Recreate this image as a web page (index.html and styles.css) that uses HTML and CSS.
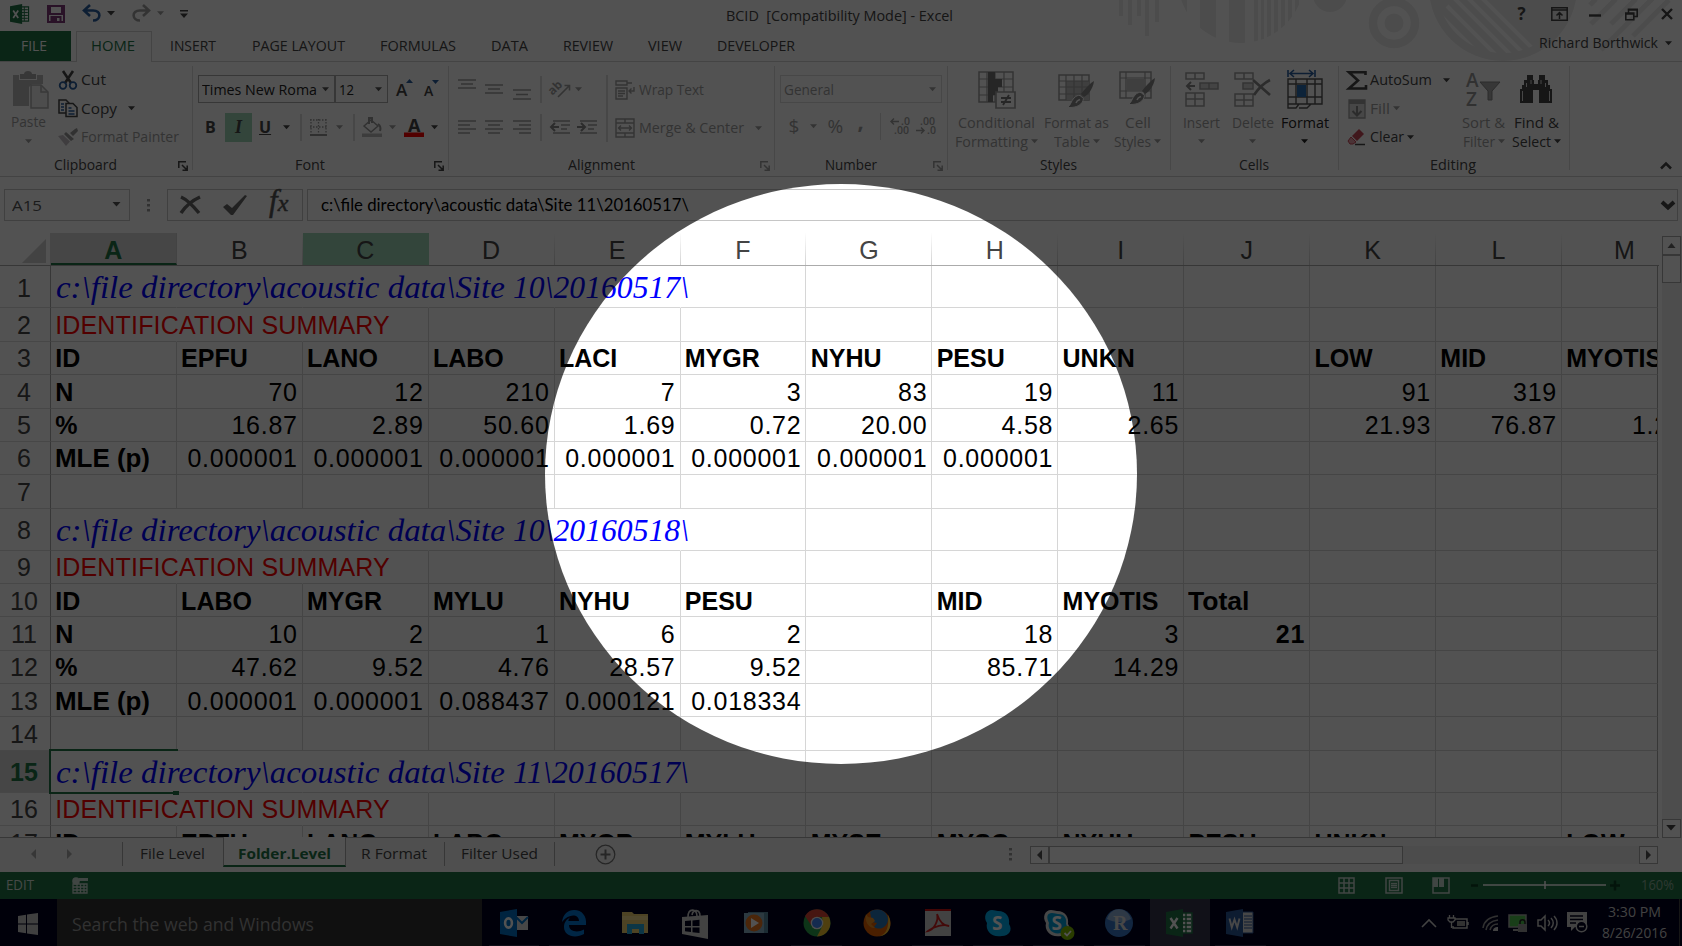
FILE: index.html
```html
<!DOCTYPE html>
<html lang="en">
<head>
<meta charset="utf-8">
<title>BCID [Compatibility Mode] - Excel</title>
<link rel="stylesheet" href="styles.css">
</head>
<body>
<svg class="defs" width="0" height="0">
  <defs>
    <symbol id="dn" viewBox="0 0 8 5"><path d="M0 0h8L4 4.6z" fill="currentColor"/></symbol>
    <symbol id="launch" viewBox="0 0 10 10"><path d="M.8 7V.8H8M4 4l5 5M9.2 4.5v4.7H4.5" fill="none" stroke="currentColor" stroke-width="1.5"/></symbol>
    <symbol id="xl" viewBox="0 0 28 28"><path d="M14 4h12v20H14z" fill="#fff" stroke="#217346" stroke-width="1.6"/><path d="M16 8h9M16 12h9M16 16h9M16 20h9M20 4v20" stroke="#217346" stroke-width="1.4"/><path d="M0 3L17 0v28L0 25z" fill="#217346"/><path d="M4.5 9l7 10.500M11.500 9l-7 10.500" stroke="#fff" stroke-width="2.400"/></symbol>
    <symbol id="brush" viewBox="0 0 28 28"><path d="M27 0c-1 8-6 14-10 16l-3-3C17 9 22 3 27 0z" fill="#888"/><path d="M13 14.500l3.500 3c-1 6-6 9.500-16 9C4 24 4 20 7 17c2-2 4-3 6-2.500z" fill="#888" stroke="#fff"/><path d="M9 22c1-3 3-3 4-3.500" stroke="#fff" fill="none" stroke-width="1.500"/></symbol>
    <symbol id="lines" viewBox="0 0 18 14"><path d="M0 1h18M0 5h12M0 9h18M0 13h12" stroke="currentColor" stroke-width="1.400"/></symbol>
  </defs>
</svg>
<div class="app">
  <div class="chrome">
    <svg class="art" viewBox="1110 0 572 61" fill="#ececec">
      <path d="M1119 0h4v16h-4zM1128 0h4v25h-4zM1137 0h4v16h-4zM1145 0h4v36h-4zM1155 0h4v22h-4z"/>
      <clipPath id="c1"><circle cx="1241" cy="-20" r="63"/></clipPath>
      <path clip-path="url(#c1)" d="M1178 0h9v50h-9zM1200 0h16v50h-16zM1229 0h16v50h-16zM1254 0h4v50h-4zM1261 0h3v50h-3zM1267 0h4v50h-4zM1274 0h4v50h-4zM1281 0h4v50h-4zM1288 0h4v50h-4zM1295 0h4v50h-4z"/>
      <circle cx="1330" cy="-5" r="17"/><circle cx="1394" cy="23" r="21" fill="none" stroke="#ececec" stroke-width="8.500"/><circle cx="1394" cy="23" r="9.500"/>
      <circle cx="1503" cy="-13" r="74"/>
      <clipPath id="c2"><circle cx="1503" cy="-13" r="66"/></clipPath>
      <path clip-path="url(#c2)" d="M1437 12l60 60M1447 6l60 60M1452-4l70 70M1464-6l70 70M1476-8l70 70" stroke="#fff" stroke-width="4"/>
      <path d="M1590 5l6-6M1591 24l25-25M1611 24l25-25M1601 50l53-53M1633 36l36-36" stroke="#ececec" stroke-width="5"/>
    </svg>
    <div class="titlebar">
      <div class="qat">
        <svg width="20" height="20"><use href="#xl"/></svg>
        <svg width="18" height="18" viewBox="0 0 18 18"><path d="M1 1h16v16H1z" fill="#fff" stroke="#80397b" stroke-width="2"/><path d="M3 1v8h12V1M4.500 17v-5h9v5" fill="none" stroke="#80397b" stroke-width="2"/><path d="M5 12h5v5H5z" fill="#80397b"/></svg>
        <svg width="18" height="17" viewBox="0 0 18 17"><path d="M7 0L1 5.500 7 11M1.500 5.500H10c9 0 8 10 0 10" fill="none" stroke="#2a5fa0" stroke-width="2.600"/></svg>
        <svg class="g4" width="8" height="5"><use href="#dn"/></svg>
        <svg class="dis" width="18" height="17" viewBox="0 0 18 17"><path d="M11 0l6 5.500L11 11M16.500 5.500H8c-9 0-8 10 0 10" fill="none" stroke="currentColor" stroke-width="2.600"/></svg>
        <svg class="dis" width="7" height="5"><use href="#dn"/></svg>
        <svg width="8" height="8" viewBox="0 0 8 8"><path d="M0 0h8v1.500H0zM0 3.500h8L4 8z" fill="#444"/></svg>
      </div>
      <div class="title"><span data-w="227">BCID&nbsp; [Compatibility Mode] - Excel</span></div>
      <div class="winbtns">
        <b class="q">?</b>
        <svg width="17" height="14" viewBox="0 0 17 14"><path d="M.8.800h15.400v12.400H.8zM.8 3h15.400M8.500 12V6M5.500 8.500l3-3 3 3" fill="none" stroke="#444" stroke-width="1.500"/></svg>
        <svg width="12" height="14" viewBox="0 0 12 14"><path d="M0 8.500h12" stroke="#444" stroke-width="2.400"/></svg>
        <svg width="13" height="13" viewBox="0 0 13 13"><path d="M.8 5h8v6.800h-8zM.8 6h8M3.500 5V1.200h8.700V8.500H9M3.500 2h9" fill="none" stroke="#444" stroke-width="1.600"/></svg>
        <svg width="12" height="12" viewBox="0 0 12 12"><path d="M1 1l10 10M11 1L1 11" stroke="#444" stroke-width="2.400"/></svg>
      </div>
    </div>
    <div class="tabs">
      <div class="tab file"><span data-w="26">FILE</span></div>
      <div class="tab home"><span data-w="44">HOME</span></div>
      <div class="tab t3"><span data-w="46">INSERT</span></div>
      <div class="tab t4"><span data-w="93">PAGE LAYOUT</span></div>
      <div class="tab t5"><span data-w="76">FORMULAS</span></div>
      <div class="tab t6"><span data-w="37">DATA</span></div>
      <div class="tab t7"><span data-w="50">REVIEW</span></div>
      <div class="tab t8"><span data-w="34">VIEW</span></div>
      <div class="tab t9"><span data-w="78">DEVELOPER</span></div>
      <div class="user"><span data-w="119">Richard Borthwick</span><svg width="7" height="5"><use href="#dn"/></svg></div>
    </div>
  </div>

  <div class="ribbon">
    <section class="group clip">
      <div class="body">
        <div class="big paste dis">
          <svg width="36" height="38" viewBox="0 0 36 38"><path d="M0 4h6v5h18V4h6v9h-11l-3 3v19H0z" fill="#bcbcbc"/><path d="M7 3h4c0-4 8-4 8 0h4v5H7z" fill="#aaa"/><path d="M18 14h10l7 7v16H18z" fill="#eee" stroke="#b0b0b0" stroke-width="1.500"/><path d="M28 14v7h7" fill="none" stroke="#b0b0b0" stroke-width="1.500"/></svg>
          <span class="l1" data-w="35">Paste</span>
          <svg class="l2" width="7" height="5"><use href="#dn"/></svg>
        </div>
        <div class="stack">
          <div class="row"><svg width="20" height="19" viewBox="0 0 20 19"><path d="M5 0l8 12M15 0L7 12" stroke="#444" stroke-width="2.600"/><circle cx="5" cy="14.500" r="3.300" fill="none" stroke="#2a5fa0" stroke-width="1.800"/><circle cx="15" cy="14.500" r="3.300" fill="none" stroke="#2a5fa0" stroke-width="1.800"/></svg><span data-w="25">Cut</span></div>
          <div class="row"><svg width="20" height="19" viewBox="0 0 20 19"><path d="M1 1h7l3 3v10H1z" fill="#fff" stroke="#444" stroke-width="1.500"/><path d="M8 4.500h7l4 4v9H8z" fill="#fff" stroke="#444" stroke-width="1.500"/><path d="M3 5h3M3 8h3M3 11h3M10.500 9h3M10.500 12h6M10.500 15h6" stroke="#2a5fa0" stroke-width="1.300"/></svg><span data-w="36">Copy</span><svg class="g10" width="7" height="5"><use href="#dn"/></svg></div>
          <div class="row dis"><svg width="20" height="18" viewBox="0 0 20 18"><path d="M19 0l1 3-5 5-3-3 5-4zM8 4l8 7-3 2-7-7z" fill="#999"/><path d="M5 7l7 6.500L8 18 0 8z" fill="#c4bfc4"/></svg><span data-w="98">Format Painter</span></div>
        </div>
      </div>
      <div class="foot"><span data-w="63">Clipboard</span><svg class="lc" width="10" height="10"><use href="#launch"/></svg></div>
    </section>

    <section class="group font">
      <div class="body col">
        <div class="combos">
          <div class="combo w1"><span data-w="115">Times New Roma</span><svg width="7" height="5"><use href="#dn"/></svg></div>
          <div class="combo w2"><span data-w="15">12</span><svg width="7" height="5"><use href="#dn"/></svg></div>
          <svg class="ag" width="18" height="20" viewBox="0 0 18 20"><text x="0" y="17" class="bigA">A</text><path d="M10 4l3.500-4L17 4z" fill="#2a5fa0"/></svg>
          <svg class="as" width="16" height="20" viewBox="0 0 16 20"><text x="0" y="17" class="smA">A</text><path d="M8 1h7l-3.500 4z" fill="#2a5fa0"/></svg>
        </div>
        <div class="fmt">
          <b>B</b><i>I</i><u>U</u><svg width="7" height="5"><use href="#dn"/></svg><s></s>
          <svg class="dis" width="17" height="17" viewBox="0 0 17 17"><path d="M1 0v15M8.500 0v15M16 0v15M0 1h17M0 8h17" stroke="#999" stroke-width="1.300" stroke-dasharray="1.500 1.500"/><path d="M0 16h17" stroke="#888" stroke-width="1.800"/></svg>
          <svg class="dis" width="7" height="5"><use href="#dn"/></svg><s></s>
          <svg class="dis" width="20" height="21" viewBox="0 0 20 21"><path d="M2 9l7-6 7 6-7 6z" fill="none" stroke="#999" stroke-width="1.500"/><path d="M7 7V1h3v5M16 7c3 2 3 4 2 7" fill="none" stroke="#999" stroke-width="2"/><path d="M0 16.500h20V20H0z" fill="#bbb"/></svg>
          <svg class="dis" width="7" height="5"><use href="#dn"/></svg>
          <svg width="20" height="20" viewBox="0 0 20 20"><text x="4" y="14" class="fcA">A</text><path d="M0 14.500h20V19H0z" fill="#f00"/></svg>
          <svg width="7" height="5"><use href="#dn"/></svg>
        </div>
      </div>
      <div class="foot"><span data-w="30">Font</span><svg class="lc" width="10" height="10"><use href="#launch"/></svg></div>
    </section>

    <section class="group align dis">
      <div class="body al">
        <div class="algrid">
          <svg width="18" height="24" viewBox="0 0 18 24"><path d="M0 3h18M3 7h12M0 11h18" stroke="currentColor" stroke-width="1.400"/></svg>
          <svg width="18" height="24" viewBox="0 0 18 24"><path d="M0 8h18M3 12h12M0 16h18" stroke="currentColor" stroke-width="1.400"/></svg>
          <svg width="18" height="24" viewBox="0 0 18 24"><path d="M0 13h18M3 17.500h12M0 22h18" stroke="currentColor" stroke-width="1.400"/></svg>
          <s></s>
          <div class="pair"><svg width="21" height="20" viewBox="0 0 21 20"><text transform="translate(4 14) rotate(-45)" x="-3" y="1" class="ab">ab</text><path d="M8 18L19 7M14.500 6.500h5v5" fill="none" stroke="currentColor" stroke-width="1.600"/></svg><svg class="g4" width="7" height="5"><use href="#dn"/></svg></div>
          <svg width="18" height="14"><use href="#lines"/></svg>
          <svg width="18" height="14" viewBox="0 0 18 14"><path d="M0 1h18M3 5h12M0 9h18M3 13h12" stroke="currentColor" stroke-width="1.400"/></svg>
          <svg width="18" height="14" viewBox="0 0 18 14"><path d="M0 1h18M6 5h12M0 9h18M6 13h12" stroke="currentColor" stroke-width="1.400"/></svg>
          <s></s>
          <div class="pair"><svg width="20" height="14" viewBox="0 0 20 14"><path d="M3 1h17M11 5h9M11 9h6M3 13h17" stroke="currentColor" stroke-width="1.400"/><path d="M9 7H2M5 3L1 7l4 4" fill="none" stroke="#888" stroke-width="2"/></svg><svg class="g7" width="20" height="14" viewBox="0 0 20 14"><path d="M3 1h17M11 5h9M11 9h6M3 13h17" stroke="currentColor" stroke-width="1.400"/><path d="M0 7h7M4 3l4 4-4 4" fill="none" stroke="#888" stroke-width="2"/></svg></div>
        </div>
        <s class="tall"></s>
        <div class="wm">
          <div class="row"><svg width="20" height="20" viewBox="0 0 20 20"><path d="M1 1h11v4H1zM12 3h5M1 8h11v11H1zM3 11h7M3 13.500h7M3 16h5M19 7v4h-5M16.500 8.500L14 11l2.500 2.500" fill="none" stroke="currentColor" stroke-width="1.400"/></svg><span data-w="65">Wrap Text</span></div>
          <div class="row"><svg width="20" height="20" viewBox="0 0 20 20"><path d="M1 1h18v18H1zM1 5h18M1 15h18M10 1v4M10 15v4M3.500 10h13M6 7.500L3.500 10 6 12.500M14 7.500l2.500 2.500-2.500 2.500" fill="none" stroke="currentColor" stroke-width="1.400"/></svg><span data-w="105">Merge &amp; Center</span><svg class="g10" width="7" height="5"><use href="#dn"/></svg></div>
        </div>
      </div>
      <div class="foot"><span data-w="67">Alignment</span><svg class="lc" width="10" height="10"><use href="#launch"/></svg></div>
    </section>

    <section class="group number dis">
      <div class="body col">
        <div class="combos"><div class="combo w3"><span data-w="50">General</span><svg width="7" height="5"><use href="#dn"/></svg></div></div>
        <div class="nums"><span class="sym">$</span><svg width="7" height="5"><use href="#dn"/></svg><span class="sym">%</span><span class="sym comma">,</span><s></s>
          <svg width="19" height="18" viewBox="0 0 19 18"><text x="11" y="8" class="dec">.0</text><text x="4" y="17" class="dec">.00</text><path d="M9 4.500H1M4 1.500l-3 3 3 3" fill="none" stroke="currentColor" stroke-width="1.500"/></svg>
          <svg width="19" height="18" viewBox="0 0 19 18"><text x="4" y="8" class="dec">.00</text><text x="11" y="17" class="dec">.0</text><path d="M0 13.500h8M5 10.500l3 3-3 3" fill="none" stroke="currentColor" stroke-width="1.500"/></svg></div>
      </div>
      <div class="foot"><span data-w="52">Number</span><svg class="lc" width="10" height="10"><use href="#launch"/></svg></div>
    </section>

    <section class="group styles dis">
      <div class="body">
        <div class="big b1"><svg width="38" height="38" viewBox="0 0 38 38"><path d="M1 1h34v30H1z" fill="#fff" stroke="currentColor" stroke-width="1.500"/><path d="M1 8h34M1 16h34M1 24h34M9 1v30M17 1v30M26 1v30" stroke="currentColor" stroke-width="1.200"/><path d="M10 1h7v7h7v8h-4v8h-5v7h-5z" fill="#777"/><path d="M18 21h19v16H18z" fill="#fff" stroke="currentColor" stroke-width="1.700"/><path d="M23 27h10M23 31h10M31 24l-6 10" stroke="#777" stroke-width="1.800"/></svg>
          <span class="l1" data-w="77">Conditional</span><div class="l2"><span data-w="73">Formatting</span><svg width="7" height="5"><use href="#dn"/></svg></div></div>
        <div class="big b2"><svg width="38" height="38" viewBox="0 0 38 38"><path d="M1 4h30v25H1z" fill="#fff" stroke="currentColor" stroke-width="1.500"/><path d="M8 10h23v19H8z" fill="#c4c4c4"/><path d="M1 10h30M1 16h30M1 23h30M8 4v25M16 4v25M24 4v25" stroke="currentColor" stroke-width="1.200"/><use href="#brush" x="9" y="10" width="28" height="28"/></svg>
          <span class="l1" data-w="65">Format as</span><div class="l2"><span data-w="36">Table</span><svg width="7" height="5"><use href="#dn"/></svg></div></div>
        <div class="big b3"><svg width="38" height="38" viewBox="0 0 38 38"><path d="M1 1h31v26H1z" fill="#fff" stroke="currentColor" stroke-width="1.500"/><path d="M1 7h31M1 20h31M7 1v26M26 1v26" stroke="currentColor" stroke-width="1.200"/><path d="M8 8h18v12H8z" fill="#c4c4c4"/><use href="#brush" x="9" y="7" width="28" height="28"/></svg>
          <span class="l1" data-w="26">Cell</span><div class="l2"><span data-w="37">Styles</span><svg width="7" height="5"><use href="#dn"/></svg></div></div>
      </div>
      <div class="foot"><span data-w="37">Styles</span></div>
    </section>

    <section class="group cells">
      <div class="body">
        <div class="big b1 dis"><svg width="34" height="38" viewBox="0 0 34 38"><path d="M1 2h18v6H1zM10 2v6M1 22h18v13H1zM1 28h18M10 22v13" fill="none" stroke="currentColor" stroke-width="1.500"/><path d="M15 12h18v6H15zM24 12v6" fill="#d4d4d4" stroke="currentColor" stroke-width="1.500"/><path d="M10 15H2M6 11l-4 4 4 4" fill="none" stroke="#888" stroke-width="2"/></svg>
          <span class="l1" data-w="37">Insert</span><svg class="l2" width="7" height="5"><use href="#dn"/></svg></div>
        <div class="big b2 dis"><svg width="38" height="38" viewBox="0 0 38 38"><path d="M1 2h18v6H1zM10 2v6M1 23h18v12H1zM1 29h18M10 23v12" fill="none" stroke="currentColor" stroke-width="1.500"/><path d="M9 12h10v6H9z" fill="#d4d4d4" stroke="currentColor" stroke-width="1.500"/><path d="M19 9l17 15M36 9C30 12 24 18 20 24" fill="none" stroke="#888" stroke-width="2.600"/></svg>
          <span class="l1" data-w="42">Delete</span><svg class="l2" width="7" height="5"><use href="#dn"/></svg></div>
        <div class="big b3"><svg width="36" height="39" viewBox="0 0 36 39"><path d="M1 0v7M28 0v7M3 3.500h23M7 0L3 3.500 7 7M22 0l4 3.500L22 7" fill="none" stroke="#2a5fa0" stroke-width="1.600"/><path d="M1 9h34v25H1zM1 14h34M1 27h34M9 9v25M20 9v25M28 9v25M1 34v4h8l3-4M12 38h8l4-4" fill="none" stroke="#555" stroke-width="1.400"/><path d="M10 15h9v12h-9z" fill="#2a6fb0"/></svg>
          <span class="l1" data-w="48">Format</span><svg class="l2" width="7" height="5"><use href="#dn"/></svg></div>
      </div>
      <div class="foot"><span data-w="30">Cells</span></div>
    </section>

    <section class="group edit">
      <div class="body">
        <div class="stack">
          <div class="row"><svg width="20" height="19" viewBox="0 0 20 19"><path d="M18.500 4V1.300H2L11 9.500 2 17.500h17V14" fill="none" stroke="#444" stroke-width="2.600"/></svg><span data-w="62">AutoSum</span><svg class="g10" width="7" height="5"><use href="#dn"/></svg></div>
          <div class="row dis"><svg width="20" height="20" viewBox="0 0 20 20"><path d="M2 1h16v18H2z" fill="#ddd" stroke="currentColor" stroke-width="1.300"/><path d="M2 1h16v4H2z" fill="currentColor"/><path d="M10 7v9M5.500 12l4.500 4.500 4.500-4.500" fill="none" stroke="#888" stroke-width="2"/></svg><span data-w="20">Fill</span><svg class="g3" width="7" height="5"><use href="#dn"/></svg></div>
          <div class="row"><svg width="20" height="17" viewBox="0 0 20 17"><path d="M12 0l5 5-7 7-5-5z" fill="#c84858"/><path d="M4 8l5 5-3 2H3l-2-3z" fill="#e8a0a8" stroke="#c84858"/><path d="M8 15.500h10" stroke="#444" stroke-width="1.500"/></svg><span data-w="34">Clear</span><svg class="g3" width="7" height="5"><use href="#dn"/></svg></div>
        </div>
        <div class="big b4 dis"><svg width="38" height="38" viewBox="0 0 38 38"><text x="1" y="16" class="az">A</text><text x="1" y="35" class="az">Z</text><path d="M15 11h20l-8 9v9h-4v-9z" fill="#aaa" stroke="#888"/></svg>
          <span class="l1" data-w="43">Sort &amp;</span><div class="l2"><span data-w="32">Filter</span><svg width="7" height="5"><use href="#dn"/></svg></div></div>
        <div class="big b5"><svg width="34" height="38" viewBox="0 0 34 38"><path d="M1 32V18h2v-4h2V9h3V4h6v5h1v4h4V9h1V4h6v5h3v5h2v4h2v14H20V19h-6v13z" fill="#444"/><path d="M3.500 20v10M30.500 20v10M7.500 12v4M26.500 12v4M12 9v4M22 9v4" stroke="#ddd" stroke-width="1"/></svg>
          <span class="l1" data-w="45">Find &amp;</span><div class="l2"><span data-w="39">Select</span><svg width="7" height="5"><use href="#dn"/></svg></div></div>
      </div>
      <div class="foot"><span data-w="46">Editing</span></div>
    </section>
    <div class="collapse"><svg width="12" height="9" viewBox="0 0 12 9"><path d="M1 7.500l5-5 5 5" fill="none" stroke="#444" stroke-width="2.500"/></svg></div>
  </div>

  <div class="fbar">
    <div class="namebox"><span data-w="30">A15</span><svg width="9" height="5"><use href="#dn"/></svg></div>
    <svg class="dots" width="3" height="13" viewBox="0 0 3 13"><path d="M0 0h3v2.500H0zM0 5h3v2.500H0zM0 10h3v2.500H0z" fill="#999"/></svg>
    <div class="fbtns">
      <svg width="22" height="20" viewBox="0 0 22 20"><path d="M2 2c7 3 13 10 18 16M21 2C12 6 6 12 2 18" fill="none" stroke="#666" stroke-width="3.400"/></svg>
      <svg width="24" height="20" viewBox="0 0 24 20"><path d="M0 12l4-3 5 4L22 0l2 1L10 20H8z" fill="#666"/></svg>
      <span class="fx">f<small>x</small></span>
    </div>
    <div class="finput"><span data-w="368">c:\file directory\acoustic data\Site 11\20160517\</span><svg width="14" height="10" viewBox="0 0 14 10"><path d="M1 2l6 5.500L13 2" fill="none" stroke="#444" stroke-width="4"/></svg></div>
  </div>

  <div class="sheetwrap">
    <div class="sheet" id="sheet"></div>
    <div class="vscroll">
      <div class="sb up"><svg width="9" height="5" viewBox="0 0 8 5"><path d="M0 5h8L4 0z" fill="#666"/></svg></div>
      <div class="thumb"></div>
      <div class="sb down"><svg width="10" height="6"><use href="#dn"/></svg></div>
    </div>
  </div>

  <div class="sheettabs">
    <div class="nav"><svg width="5" height="10" viewBox="0 0 5 10"><path d="M5 0v10L0 5z" fill="#aaa"/></svg><svg width="5" height="10" viewBox="0 0 5 10"><path d="M0 0v10l5-5z" fill="#aaa"/></svg></div>
    <div class="st s1"><span data-w="65">File Level</span></div>
    <div class="st act"><span data-w="93">Folder.Level</span></div>
    <div class="st s3"><span data-w="66">R Format</span></div>
    <div class="st s4"><span data-w="77">Filter Used</span></div>
    <svg class="add" width="21" height="21" viewBox="0 0 21 21"><circle cx="10.500" cy="10.500" r="9.300" fill="none" stroke="#777" stroke-width="1.300"/><path d="M10.500 5.500v10M5.500 10.500h10" stroke="#777" stroke-width="2"/></svg>
    <svg class="hd" width="3" height="13" viewBox="0 0 3 13"><path d="M0 0h3v2.500H0zM0 5h3v2.500H0zM0 10h3v2.500H0z" fill="#999"/></svg>
    <div class="hscroll">
      <div class="sb"><svg width="5" height="10" viewBox="0 0 5 10"><path d="M5 0v10L0 5z" fill="#555"/></svg></div>
      <div class="hthumb"></div>
      <div class="sb end"><svg width="5" height="10" viewBox="0 0 5 10"><path d="M0 0v10l5-5z" fill="#555"/></svg></div>
    </div>
  </div>

  <div class="status">
    <span class="mode" data-w="28">EDIT</span>
    <svg class="macro" width="16" height="17" viewBox="0 0 16 17"><path d="M7 1h9v3H7z" fill="#c8d8cf"/><path d="M1 7h14v9H1zM1 10h14M1 13h14M5 7v9M8.500 7v9M12 7v9" fill="none" stroke="#c8d8cf" stroke-width="1.300"/><circle cx="4" cy="4" r="3.800" fill="#c8d8cf"/></svg>
    <svg class="v1" width="17" height="17" viewBox="0 0 17 17"><path d="M1 1h15v15H1zM1 6h15M1 11h15M6 1v15M11 1v15" fill="none" stroke="#c8d8cf" stroke-width="1.500"/></svg>
    <svg class="v2" width="18" height="17" viewBox="0 0 18 17"><path d="M1 1h16v15H1zM4.500 3.500h9v10h-9zM6 6.500h6M6 8.500h6M6 10.500h6" fill="none" stroke="#c8d8cf" stroke-width="1.500"/></svg>
    <svg class="v3" width="18" height="17" viewBox="0 0 18 17"><path d="M1 1h16v15H1z" fill="none" stroke="#c8d8cf" stroke-width="1.500"/><path d="M1 1h5v9H1zM7 1h5v9H7z" fill="#c8d8cf"/></svg>
    <svg class="zoom" width="150" height="14" viewBox="0 0 150 14"><path d="M0 7.500h7M139 7.500h10M144 2.500v10" stroke="#0c3f22" stroke-width="2.500"/><path d="M12 7h123M74 3v8" stroke="#fff" stroke-width="1.500"/></svg>
    <span class="pct" data-w="33">160%</span>
  </div>

  <div class="taskbar">
    <div class="start"><svg width="20" height="22" viewBox="0 0 20 22"><path d="M0 3l8-1.200v8.700H0zM9 1.600L20 0v10.500H9zM0 11.500h8v8.700L0 19zM9 11.500h11V22L9 20.400z" fill="#c8c8c8"/></svg></div>
    <div class="search"><span data-w="242">Search the web and Windows</span></div>
    <div class="apps">
      <div class="on"><svg width="28" height="28" viewBox="0 0 28 28"><path d="M16 7h12v14H16z" fill="#ddd"/><path d="M16 8l6 6 6-6" fill="none" stroke="#0072c6" stroke-width="2"/><path d="M0 3L17 0v28L0 25z" fill="#0072c6"/><ellipse cx="8.500" cy="14" rx="3.400" ry="4.600" fill="none" stroke="#fff" stroke-width="2.600"/></svg></div>
      <div class="on"><svg width="28" height="28" viewBox="0 0 28 28"><path d="M2 13C3 5 8 1 14 1c8 0 13 6 12 15H9c0 7 9 8 15 4.500V25c-9 5-20 2-20-7 0-5 3-8 6-9.500C9 10 8 11 8.500 12H19c0-7-10-8-17 1z" fill="#0078d7"/></svg></div>
      <div class="on"><svg width="28" height="28" viewBox="0 0 28 28"><path d="M1 3h10l2 2h14v19H1z" fill="#f0d070"/><path d="M1 7h26v4H1z" fill="#f8e090"/><path d="M6 15h17v10h-5v-5h-7v5H6z" fill="#28a8d8"/></svg></div>
      <div><svg width="28" height="30" viewBox="0 0 28 30"><path d="M7 8c0-9 9-9 9-1M11 6c1-6 8-6 8 1" fill="none" stroke="#ccc" stroke-width="1.600"/><path d="M1 8l26-2v24L1 25z" fill="#ccc"/><path d="M4 12l6-.5V17H4zM11.500 11.500l7-.7V17h-7zM4 18.500h6V23l-6-.7zM11.500 18.500h7V24l-7-.8z" fill="#00001f"/></svg></div>
      <div><svg width="28" height="28" viewBox="0 0 28 28"><path d="M6 3h20v21H6z" fill="#5888a0"/><path d="M2 4h20v20H2z" fill="#88b0c8"/><circle cx="12" cy="14" r="8.500" fill="#e87820"/><path d="M9 9v10l8-5z" fill="#fff"/></svg></div>
      <div class="on"><svg width="28" height="28" viewBox="0 0 28 28"><circle cx="14" cy="14" r="13.500" fill="#2ba24c"/><path d="M2 7A13.500 13.500 0 0 1 26 8H14L8 16z" fill="#db4437"/><path d="M26 8a13.500 13.500 0 0 1-12 19.500L20 16l-1-8z" fill="#f4c430"/><circle cx="14" cy="14" r="6.300" fill="#eee"/><circle cx="14" cy="14" r="5" fill="#4285f4"/></svg></div>
      <div><svg width="28" height="28" viewBox="0 0 28 28"><circle cx="14" cy="14" r="13.500" fill="#e66000"/><path d="M25 6c5 9 2 20-9 21.500 8-3 10-9 9-21.500z" fill="#f8c030"/><path d="M7 3c7-5 17-2 18 7 0 8-8 12-14 8l3-4-5-1-1-5z" fill="#2878b8"/><path d="M3 5l2 3 5 1 2 3-4 3 4 4c-6 1-11-7-9-14z" fill="#f09020"/></svg></div>
      <div class="on"><svg width="28" height="28" viewBox="0 0 28 28"><path d="M1 1h26v26H1z" fill="#ccc"/><path d="M1 0h26v2H1z" fill="#d01010"/><path d="M13 5c2 6 5 12 12 12-5-2-15 0-21 5 6-1 11-11 9-17z" fill="none" stroke="#d02020" stroke-width="1.800"/></svg></div>
      <div class="on"><svg width="28" height="28" viewBox="0 0 28 28"><path d="M8 1c3 0 4 1 6 1 9 0 12 7 11 13 4 6 0 12-7 12-10 2-17-5-15-13C-1 8 2 1 8 1z" fill="#00aff0"/><text x="8" y="21" class="sk">S</text></svg></div>
      <div class="on"><svg width="32" height="31" viewBox="0 0 32 31"><path d="M8 1c3 0 4 1 6 1 9 0 12 7 11 13 4 6 0 12-7 12-10 2-17-5-15-13C-1 8 2 1 8 1z" fill="#ddd"/><path d="M9 4c3 0 4 1 6 1 7 0 9 5 8 10 3 5 0 9-5 9-8 2-14-4-12-10C3 8 4 4 9 4z" fill="#00a0d8"/><text x="8.500" y="20.500" class="sk">S</text><circle cx="24.500" cy="24" r="7" fill="#7fba00"/><path d="M21.500 24l2.500 2.500 4-4.500" fill="none" stroke="#fff" stroke-width="1.800"/></svg></div>
      <div class="on"><svg width="28" height="28" viewBox="0 0 28 28"><circle cx="14" cy="14" r="14" fill="#3878c8"/><path d="M2 10C6-3 22-3 26 10c-7 4-17 4-24 0z" fill="#90b0d8"/><text x="8" y="21" class="rr">R</text></svg></div>
      <div class="cur"><svg width="28" height="28"><use href="#xl"/></svg></div>
      <div class="on"><svg width="28" height="28" viewBox="0 0 28 28"><path d="M16 3h11v21H16z" fill="#ddd" stroke="#2b579a"/><path d="M18 7h8M18 10h8M18 13h8M18 16h8M18 19h8" stroke="#2b579a"/><path d="M0 3L17 0v28L0 25z" fill="#2b579a"/><path d="M3.500 9.500l2.300 9 2.700-8 2.700 8 2.300-9" fill="none" stroke="#ddd" stroke-width="1.900"/></svg></div>
    </div>
    <div class="tray">
      <svg width="16" height="10" viewBox="0 0 16 10"><path d="M1 9l7-7 7 7" fill="none" stroke="#ccc" stroke-width="1.600"/></svg>
      <svg width="21" height="15" viewBox="0 0 21 15"><path d="M7 4h12v9H5v-2M20 7v3" fill="none" stroke="#ccc" stroke-width="1.500"/><path d="M9 6h8v5H9z" fill="#999"/><path d="M1.500 0v3M5.500 0v3M0 3h7v2L5 7H2L0 5zM3.500 7v6" fill="none" stroke="#ccc" stroke-width="1.300"/></svg>
      <svg width="17" height="16" viewBox="0 0 17 16"><path d="M1 13C2 6 7 2 16 1M4 15C5 9 9 6 16 5M8 15c1-4 3-6 8-6" fill="none" stroke="#999" stroke-width="1.600"/><path d="M11 16c0-3 2-4 5-4v4z" fill="#ccc"/></svg>
      <svg width="20" height="18" viewBox="0 0 20 18"><path d="M1 1h17v12H1z" fill="#50c050" stroke="#aaa" stroke-width="1.500"/><path d="M5 16h7" stroke="#aaa" stroke-width="2"/><path d="M10 10h9v8h-9z" fill="#999"/><path d="M12 10V8c0-3 5-3 5 0v2" fill="none" stroke="#222" stroke-width="1.500"/></svg>
      <svg width="21" height="16" viewBox="0 0 21 16"><path d="M1 5h3l4-4v14l-4-4H1zM11 5c2 2 2 4 0 6M14 3c3 3 3 7 0 10M17 1c4 4 4 10 0 14" fill="none" stroke="#ccc" stroke-width="1.500"/></svg>
      <svg width="21" height="21" viewBox="0 0 21 21"><path d="M0 0h20v15H8l-4 4v-4H0z" fill="#ccc"/><path d="M3 4h13M3 7.500h13M3 11h6" stroke="#00001f" stroke-width="1.600"/><circle cx="14.500" cy="14.500" r="5.300" fill="#00001f" stroke="#ccc" stroke-width="1.500"/><path d="M12 14.500h5" stroke="#ccc" stroke-width="1.500"/></svg>
      <div class="clock"><span data-w="53">3:30 PM</span><span data-w="65">8/26/2016</span></div>
    </div>
  </div>
  <div class="spotlight"></div>
</div>
<script src="app.js"></script>
</body>
</html>
```

FILE: styles.css
```css
* { box-sizing: border-box; }
body { margin: 0; background: #fff; }
svg { display: block; flex: none; overflow: visible; }
.defs { position: absolute; }
.app {
  position: relative; width: 1682px; height: 946px; overflow: hidden;
  display: flex; flex-direction: column;
  font-family: "Open Sans", "Noto Sans", sans-serif; font-size: 14.8px; line-height: 20px;
  color: #444; background: #fff; --dy: -1px;
}
[data-w] { display: inline-block; white-space: pre; flex: none; }
[data-w] > em { display: inline-block; font-style: inherit; transform-origin: 0 50%; translate: 0 var(--dy); }
.body .big, .foot, .sheet, .finput, .search, .namebox { --dy: 0px; }
.body .paste { --dy: -1px; }
.spotlight {
  position: absolute; left: 545px; top: 184px; width: 592px; height: 580px;
  border-radius: 50%; box-shadow: 0 0 0 1300px rgba(0, 0, 0, .68);
}

/* title bar and tabs */
.chrome { position: relative; height: 62px; border-bottom: 1.500px solid #d4d4d4; flex: none; }
.art { position: absolute; right: 0; top: 0; width: 572px; height: 61px; overflow: hidden; }
.titlebar { position: relative; display: grid; grid-template-columns: 726px 1fr 165px; height: 31px; }
.qat { display: grid; grid-template-columns: 37px 36px 20px 29px 25px 23px 10px; padding-left: 10px; align-items: center; height: 27px; }
.title { padding-top: 6px; }
.winbtns { display: grid; grid-template-columns: 33px 38px 36px 36px 12px; align-items: center; height: 28px; padding-left: .500px; }
.q { font-size: 17px; }
.tabs { position: relative; display: flex; height: 31px; }
.tab { padding-top: 5px; height: 30px; }
.file { width: 71px; background: #217346; color: #fff; padding-left: 21px; }
.home { width: 76px; margin-left: 5px; height: 31px; border: 1.500px solid #d4d4d4; border-bottom: 0; background: #fff; color: #217346; padding: 4px 0 0 14px; }
.t3 { margin-left: 18px; width: 82px; }
.t4 { width: 128px; }
.t5 { width: 111px; }
.t6 { width: 72px; }
.t7 { width: 85px; }
.t8 { width: 69px; }
.user { margin-left: auto; display: flex; align-items: center; gap: 7px; height: 24px; padding-right: 10px; }

/* ribbon */
.ribbon { display: flex; height: 114.500px; border-bottom: 1.500px solid #d0d0d0; flex: none; }
.group { display: flex; flex-direction: column; height: 104px; margin-top: 4px; border-right: 1.500px solid #dcdcdc; flex: none; }
.body { display: flex; height: 90px; flex: none; }
.col { flex-direction: column; }
.foot { display: flex; height: 18px; position: relative; justify-content: center; font-size: 13.800px; line-height: 18px; color: #444; flex: none; }
.lc { position: absolute; right: 4px; top: 5px; }
.dis { color: #a0a0a0; }
.number .lc, .align .lc { color: #a0a0a0; }
.clip { width: 193px; }
.font { width: 255.500px; }
.align { width: 326px; }
.number { width: 173px; }
.styles { width: 223px; }
.cells { width: 168px; }
.edit { width: 231px; }
.clip .foot { padding-right: 22px; }
.font .foot { padding-right: 20px; }
.align .foot { padding-right: 19px; }
.number .foot { padding-right: 20px; }
.edit .foot { padding-right: 2px; }
.big { display: flex; flex-direction: column; align-items: center; padding-top: 5px; height: 90px; }
.l1 { margin-top: 3px; height: 20px; }
div.l2 { display: flex; align-items: center; gap: 3px; height: 20px; margin-top: -1px; }
svg.l2 { margin-top: 7px; }
.paste { width: 58px; padding-right: 1px; }
.paste > svg:first-child { margin-left: 5px; }
.stack { display: grid; grid-template-rows: 28.500px 28.500px 28.500px; }
.row { display: flex; align-items: center; }
.g3 { margin-left: 3px; }
.g4 { margin-left: 4px; }
.g7 { margin-left: 7px; }
.g10 { margin-left: 11px; }
.combos { display: flex; padding: 9px 0 0 5px; height: 37px; color: #222; --dy: 0px; }
.combo { display: flex; align-items: center; justify-content: space-between; height: 28px; border: 1.500px solid #ababab; padding: 0 5px 0 3px; background: #fff; }
.combo svg { color: #555; }
.w1 { width: 137px; }
.w2 { width: 53px; margin-left: -.500px; }
.w3 { width: 162px; border-color: #ddd; color: #a0a0a0; }
.w3 svg { color: #a0a0a0; }
.ag { margin: 4px 0 0 8px; }
.as { margin: 4px 0 0 10px; }
.bigA { font: 600 17px "Open Sans", sans-serif; fill: #444; }
.smA { font: 600 14px "Open Sans", sans-serif; fill: #444; }
.fcA { font: 700 18px "Open Sans", sans-serif; fill: #444; }
.fmt { display: grid; grid-template-columns: 20px 35px 23px 17px 10px 26px 17px 9px 27px 15px 27px 8px; padding-left: 12px; align-items: center; height: 30px; margin-top: 9.500px; }
.fmt b, .fmt u { font-weight: 700; font-size: 16px; margin-top: -2px; }
.fmt i { width: 27px; height: 29px; background: #9fd5b7; text-align: center; font: italic 700 18px/28px "Liberation Serif", serif; }
.fmt u { margin-left: -1px; }
s { width: 1.500px; height: 27px; background: #dcdcdc; display: block; }
.al { padding: 9px 0 0 9px; }
.algrid { display: grid; grid-template-columns: 27.500px 27.500px 27.500px 10px 56px; grid-template-rows: 28px 48px; align-items: center; height: 76px; }
.pair { display: flex; align-items: center; }
.tall { height: 67px; }
.wm { display: grid; grid-template-rows: 30px 46px; padding-left: 7.500px; }
.row > span { margin-left: 3px; }
.wm .row > span { margin-left: 4px; }
.ab { font: 700 12px "Open Sans", sans-serif; fill: currentColor; }
.nums { display: grid; grid-template-columns: 21px 18px 30px 22px 10px 26px 19px; padding-left: 14px; align-items: center; height: 30px; margin-top: 8px; }
.sym { font-size: 19px; }
.comma { font-weight: 700; font-size: 22px; line-height: 10px; margin-top: -12px; }
.dec { font: 600 10.500px "Open Sans", sans-serif; fill: currentColor; }
.styles .b1 { width: 84px; margin-left: 7px; }
.styles .b2 { width: 78px; margin-left: -1px; }
.styles .b3 { width: 46px; margin-left: -1px; }
.cells .b1 { width: 38px; margin-left: 12px; }
.cells .b2 { width: 46px; margin-left: 9px; }
.cells .b3 { width: 48px; margin-left: 5px; color: #222; }
.cells .b3 > svg:first-child { margin-top: -1px; }
.edit .stack { width: 119px; margin-left: 8px; }
.edit .b4 { width: 45px; margin-left: -4.500px; }
.edit .b5 { width: 50px; margin-left: 5px; }
.az { font: 600 19px "Open Sans", sans-serif; fill: #999; }
.collapse { margin: 99px 10px 0 auto; }

/* formula bar */
.fbar { display: flex; height: 56.500px; padding: 12px 4px 0; flex: none; }
.namebox, .fbtns, .finput { height: 32px; border: 1.500px solid #c6c6c6; display: flex; align-items: center; background: #fff; }
.namebox { width: 126px; padding: 0 8px 0 7px; justify-content: space-between; color: #555; }
.dots { margin: 10px 0 0 17px; }
.fbtns { margin-left: 17px; width: 136px; padding-left: 11px; gap: 22px; }
.fx { font: italic 400 31px/26px "Liberation Serif", serif; color: #555; margin-top: -5px; -webkit-text-stroke: .5px #555; }
.fx small { font-size: 24px; }
.finput { margin-left: 4px; width: 1371px; padding: 0 2px 0 13px; justify-content: space-between; font-family: Lato, "Open Sans", sans-serif; font-size: 16.500px; color: #000; }

/* grid */
.sheetwrap { display: flex; height: 604.500px; flex: none; }
.sheet { width: 1658.500px; height: 604.500px; overflow: hidden; border-bottom: 1.500px solid #ababab; font-family: "Liberation Sans", Arial, sans-serif; font-size: 25px; color: #000; }
.sr { display: grid; grid-template-columns: 50.900px repeat(13, 125.930px); grid-template-rows: 100%; height: 33.350px; line-height: 33px; width: 1689px; }
.sr.tallr { height: 42.200px; line-height: 43px; }
.sr.head { height: 33.300px; line-height: 34px; border-bottom: 1.500px solid #ababab; color: #444; text-align: center; }
.head > div { border-right: 1.500px solid; border-image: linear-gradient(#fff, #d0d0d0) 1; }
.head > .corner { display: flex; justify-content: flex-end; padding: 6px 4px 0 0; border-image: none; border-color: #d8d8d8; }
.head > .selh { background: #dadada; color: #217346; font-weight: 700; border-image: none; border-color: #d0d0d0; border-bottom: 2.500px solid #217346; }
.head > .hov { background: #9fd5b7; border-image: none; border-color: #9fd5b7; }
.rn { text-align: center; color: #444; border-right: 1.500px solid #ababab; border-bottom: 1px solid #ddd; padding: .500px 2px 0 0; }
.rn.cur { background: #dadada; color: #217346; font-weight: 700; }
.c { border-right: 1.500px solid #d6d6d6; border-bottom: 1.500px solid #d6d6d6; white-space: pre; padding: .500px 4px 0 4.300px; min-width: 0; min-height: 0; }
.c.open { border-right-color: transparent; }
.c.n { text-align: right; letter-spacing: .750px; }
.c.b { font-weight: 700; }
.c.red { color: #f00; letter-spacing: .170px; }
.c.path { font: italic 31px/42px "Liberation Serif", "Times New Roman", serif; color: #00f; padding: 1px 0 0 5px; }
.c.cell15 { position: relative; }
.cell15::before { content: ""; position: absolute; left: -1.500px; top: -2px; right: -2px; bottom: -2px; border: 2px solid #217346; border-right: 0; }
.cell15::after { content: ""; position: absolute; right: -3px; bottom: -3px; width: 6px; height: 4px; background: #217346; }
.sheet .sr:nth-child(n+2) > :last-child { width: 96.500px; border-right: 1.500px solid #ababab; overflow: hidden; }
.clipn { text-align: left !important; padding-left: 70px !important; }
.vscroll { width: 20px; margin: 3px 0 0 3px; background: #f0f0f0; display: flex; flex-direction: column; }
.sb { width: 19px; height: 18.500px; border: 1.500px solid #ababab; background: #fff; display: flex; align-items: center; justify-content: center; flex: none; }
.thumb { width: 19px; height: 28px; border: 1.500px solid #ababab; background: #fff; }
.down { margin-top: auto; }

/* sheet tabs */
.sheettabs { display: flex; height: 34px; background: #f6f6f6; flex: none; font-size: 15px; }
.nav { width: 123px; display: flex; gap: 31px; padding: 11px 0 0 31px; }
.st { height: 24px; margin-top: 4px; padding-top: 2px; border-right: 1.500px solid #ababab; }
.s1 { width: 101px; padding-left: 17px; border-left: 1.500px solid #ababab; border-right: 0; margin-left: -1px; }
.act { width: 123px; height: 30px; margin-top: -1px; padding-top: 7px; padding-left: 13.500px; background: #fff; border: 1.500px solid #ababab; border-top: 0; border-bottom: 2.500px solid #217346; color: #217346; font-weight: 700; }
.s3 { width: 99px; padding-left: 14.500px; }
.s4 { width: 110px; padding-left: 16px; }
.add { margin: 6px 0 0 40px; }
.hd { margin: 10px 0 0 393px; }
.hscroll { margin: 8px 0 0 17.500px; width: 628.500px; height: 18.500px; background: #ededed; display: flex; }
.hthumb { width: 354px; border: 1.500px solid #ababab; background: #fff; }
.end { margin-left: auto; }

/* status bar */
.status { display: flex; align-items: center; height: 27.500px; background: #217346; color: #d8e4dc; flex: none; font-size: 14px; --dy: 0px; }
.mode { margin-left: 6px; }
.macro { margin-left: 38px; }
.v1 { margin-left: 1250px; }
.v2 { margin-left: 30px; }
.v3 { margin-left: 29px; }
.zoom { margin-left: 21px; }
.pct { margin-left: 20px; color: #8cb09a; }

/* task bar */
.taskbar { display: flex; height: 47px; background: #00001f; flex: none; --dy: -.500px; }
.start { width: 57px; padding: 14px 0 0 17.500px; }
.search { width: 425px; background: #333; color: #999; font-size: 18px; line-height: 24px; padding: 13px 0 0 14.500px; }
.apps { display: grid; grid-template-columns: repeat(13, 60.550px); padding-left: 1.500px; }
.apps > div { display: flex; justify-content: center; padding-top: 10px; height: 47px; position: relative; }
.apps > .on::after { content: ""; position: absolute; left: 5px; right: 5px; bottom: 0; height: 1.500px; background: #303050; }
.apps > .cur { background: #35354c; }
.sk { font: 700 19px "Open Sans", sans-serif; fill: #fff; }
.rr { font: 700 20px "Liberation Serif", serif; fill: #ddd; }
.tray { margin-left: auto; display: grid; grid-template-columns: 27px 34px 26px 29px 30px 34px 81px; align-items: center; width: 261px; }
.clock { display: flex; flex-direction: column; align-items: center; gap: 1px; color: #ccc; height: 47px; border-right: 1.500px solid #444; padding: 2px 11px 0 0; width: 79px; }
```

FILE: app.js
```js
const path = (site, day) => ({ head: "c:\\file directory\\acoustic data\\Site ", tail: `${site}\\${day}\\` });
const summary = { red: "IDENTIFICATION SUMMARY" };
const rows = [
  path(10, "20160517"),
  summary,
  ["ID", "EPFU", "LANO", "LABO", "LACI", "MYGR", "NYHU", "PESU", "UNKN", "", "LOW", "MID", "MYOTIS"],
  ["N", "70", "12", "210", "7", "3", "83", "19", "11", "", "91", "319", ""],
  ["%", "16.87", "2.89", "50.60", "1.69", "0.72", "20.00", "4.58", "2.65", "", "21.93", "76.87", "1.20"],
  ["MLE (p)", "0.000001", "0.000001", "0.000001", "0.000001", "0.000001", "0.000001", "0.000001"],
  [],
  path(10, "20160518"),
  summary,
  ["ID", "LABO", "MYGR", "MYLU", "NYHU", "PESU", "", "MID", "MYOTIS", "Total"],
  ["N", "10", "2", "1", "6", "2", "", "18", "3", "*21"],
  ["%", "47.62", "9.52", "4.76", "28.57", "9.52", "", "85.71", "14.29"],
  ["MLE (p)", "0.000001", "0.000001", "0.088437", "0.000121", "0.018334"],
  [],
  path(11, "20160517"),
  summary,
  ["ID", "EPFU", "LANO", "LABO", "MYGR", "MYLU", "MYSE", "MYSO", "NYHU", "PESU", "UNKN", "", "LOW"],
];
const widths = { "MLE (p)": 95, "Total": 61.5 };

const corner = '<svg width="24" height="24" viewBox="0 0 24 24"><path d="M24 0v24H0z" fill="#d0d0d0"/></svg>';
let html = `<div class="sr head"><div class="corner">${corner}</div>`;
for (const letter of "ABCDEFGHIJKLM") {
  const cls = letter === "A" ? "selh" : letter === "C" ? "hov" : "";
  html += `<div class="${cls}">${letter}</div>`;
}
html += "</div>";

rows.forEach((row, i) => {
  const isPath = !!row.head;
  html += `<div class="sr ${isPath ? "tallr" : ""}"><div class="rn ${i === 14 ? "cur" : ""}">${i + 1}</div>`;
  for (let k = 0; k < 13; k++) {
    let cls = "c", text = "";
    if (isPath) {
      if (k === 0) { cls += " path"; text = `<span data-w="457">${row.head}</span><span data-w="176">${row.tail}</span>`; }
      if (k < 5) cls += " open";
      if (k === 0 && i === 14) cls += " cell15";
    } else if (row.red) {
      if (k === 0) { cls += " red"; text = row.red; }
      if (k < 2) cls += " open";
    } else {
      text = row[k] || "";
      const total = text.startsWith("*");
      if (total) text = text.slice(1);
      if (/^[\d.]+$/.test(text)) cls += total ? " n b" : " n";
      else cls += " b";
      if (k === 12 && /^\d/.test(text)) cls += " clipn";
      if (widths[text]) text = `<span data-w="${widths[text]}">${text}</span>`;
    }
    html += `<div class="${cls}">${text}</div>`;
  }
  html += "</div>";
});
document.getElementById("sheet").innerHTML = html;

// Condense or widen each label to its set width.
document.querySelectorAll("[data-w]").forEach((el) => {
  const inner = document.createElement("em");
  inner.append(...el.childNodes);
  el.append(inner);
  const want = +el.dataset.w;
  const have = inner.getBoundingClientRect().width;
  el.style.width = want + "px";
  inner.style.transform = `scaleX(${want / have})`;
});
```
